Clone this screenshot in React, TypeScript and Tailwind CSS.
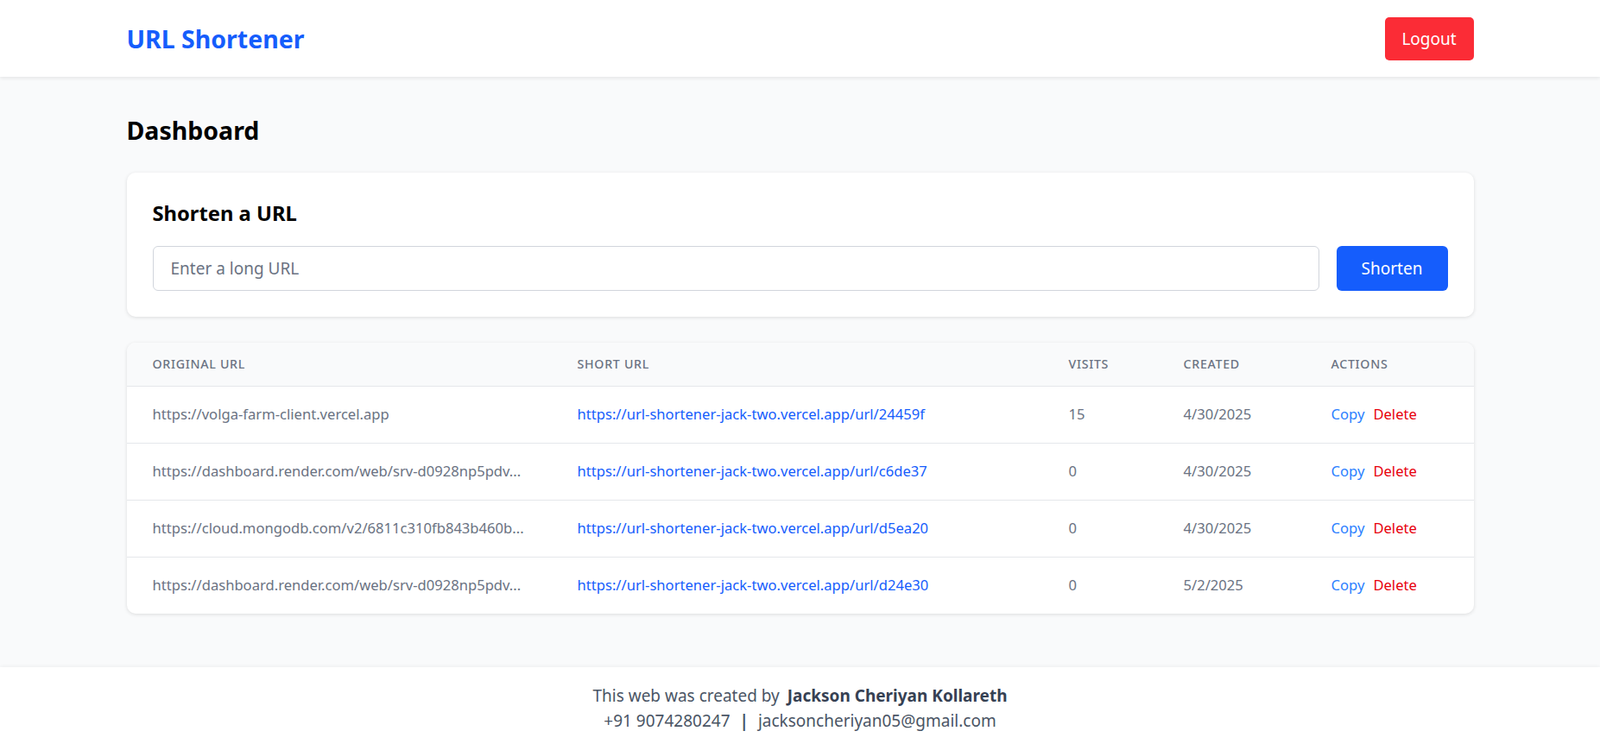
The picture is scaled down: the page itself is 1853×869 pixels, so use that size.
import React from "react";

const rows = [
  {
    original: "https://volga-farm-client.vercel.app",
    short: "https://url-shortener-jack-two.vercel.app/url/24459f",
    visits: "15",
    created: "4/30/2025",
  },
  {
    original: "https://dashboard.render.com/web/srv-d0928np5pdv...",
    short: "https://url-shortener-jack-two.vercel.app/url/c6de37",
    visits: "0",
    created: "4/30/2025",
  },
  {
    original: "https://cloud.mongodb.com/v2/6811c310fb843b460b...",
    short: "https://url-shortener-jack-two.vercel.app/url/d5ea20",
    visits: "0",
    created: "4/30/2025",
  },
  {
    original: "https://dashboard.render.com/web/srv-d0928np5pdv...",
    short: "https://url-shortener-jack-two.vercel.app/url/d24e30",
    visits: "0",
    created: "5/2/2025",
  },
];

export default function App() {
  return (
    <div
      className="min-h-screen flex flex-col bg-gray-50"
      style={{ fontFamily: '"Noto Sans", "Open Sans", sans-serif' }}
    >
      <header className="bg-white h-[89px] shadow-[0_2px_4px_rgba(0,0,0,0.08)] relative z-10">
        <div className="w-[1560px] mx-auto h-full flex items-center justify-between">
          <h1 className="text-[28.5px] font-bold text-[#155dfc] leading-[40px]">URL Shortener</h1>
          <button className="bg-[#fb2c36] text-white text-[19px] leading-[30px] rounded-[5px] h-[50px] w-[103px] flex items-center justify-center">
            Logout
          </button>
        </div>
      </header>

      <main className="flex-1 pt-[42px]">
        <div className="w-[1560px] mx-auto">
          <h2 className="text-[28.5px] font-bold text-black leading-[40px] mb-[29px]">Dashboard</h2>

          <section className="bg-white rounded-[10px] shadow-[0_1px_4px_rgba(0,0,0,0.12)] p-[30px] mb-[30px]">
            <h3 className="text-[23.75px] font-bold text-black leading-[35px] mb-[20px]">Shorten a URL</h3>
            <div className="flex gap-[20px]">
              <input
                type="text"
                placeholder="Enter a long URL"
                className="flex-1 h-[52px] border border-[#d1d5dc] rounded-[6px] px-[20px] text-[19px] text-gray-800 placeholder:text-[#6a7282] outline-none bg-white"
              />
              <button className="bg-[#155dfc] text-white text-[19px] leading-[30px] w-[129px] h-[52px] rounded-[6px]">
                Shorten
              </button>
            </div>
          </section>

          <section className="bg-white rounded-[10px] shadow-[0_1px_4px_rgba(0,0,0,0.12)] overflow-hidden">
            <table className="w-full table-fixed border-collapse">
              <thead className="bg-[#f9fafb]">
                <tr className="border-b border-[#e5e7eb]">
                  <th className="w-[492px] text-left px-[30px] h-[50px] text-[14.2px] font-medium uppercase tracking-wider text-[#6a7282]">
                    Original URL
                  </th>
                  <th className="w-[569px] text-left px-[30px] text-[14.2px] font-medium uppercase tracking-wider text-[#6a7282]">
                    Short URL
                  </th>
                  <th className="w-[133px] text-left px-[30px] text-[14.2px] font-medium uppercase tracking-wider text-[#6a7282]">
                    Visits
                  </th>
                  <th className="w-[171px] text-left px-[30px] text-[14.2px] font-medium uppercase tracking-wider text-[#6a7282]">
                    Created
                  </th>
                  <th className="text-left px-[30px] text-[14.2px] font-medium uppercase tracking-wider text-[#6a7282]">
                    Actions
                  </th>
                </tr>
              </thead>
              <tbody>
                {rows.map((r, i) => (
                  <tr key={i} className={i < rows.length - 1 ? "border-b border-[#e5e7eb]" : ""}>
                    <td className="px-[30px] h-[66px] text-[16.6px] text-[#6a7282] whitespace-nowrap overflow-hidden">
                      {r.original}
                    </td>
                    <td className="px-[30px] text-[16.6px] text-[#155dfc] whitespace-nowrap">
                      <a href="#">{r.short}</a>
                    </td>
                    <td className="px-[30px] text-[16.6px] text-[#6a7282]">{r.visits}</td>
                    <td className="px-[30px] text-[16.6px] text-[#6a7282]">{r.created}</td>
                    <td className="px-[30px] text-[16.6px] whitespace-nowrap">
                      <span className="text-[#2b7fff] mr-[10px]">Copy</span>
                      <span className="text-[#e7000b]">Delete</span>
                    </td>
                  </tr>
                ))}
              </tbody>
            </table>
          </section>
        </div>
      </main>

      <footer className="bg-white h-[96px] shadow-[0_-1px_4px_rgba(0,0,0,0.05)] flex flex-col items-center justify-center text-[19px] leading-[29px] text-[#4a5565]">
        <p>
          This web was created by <span className="font-bold text-[#364153] ml-[4px]">Jackson Cheriyan Kollareth</span>
        </p>
        <p>
          +91 9074280247 <span className="font-bold mx-[6px]">|</span> jacksoncheriyan05@gmail.com
        </p>
      </footer>
    </div>
  );
}
